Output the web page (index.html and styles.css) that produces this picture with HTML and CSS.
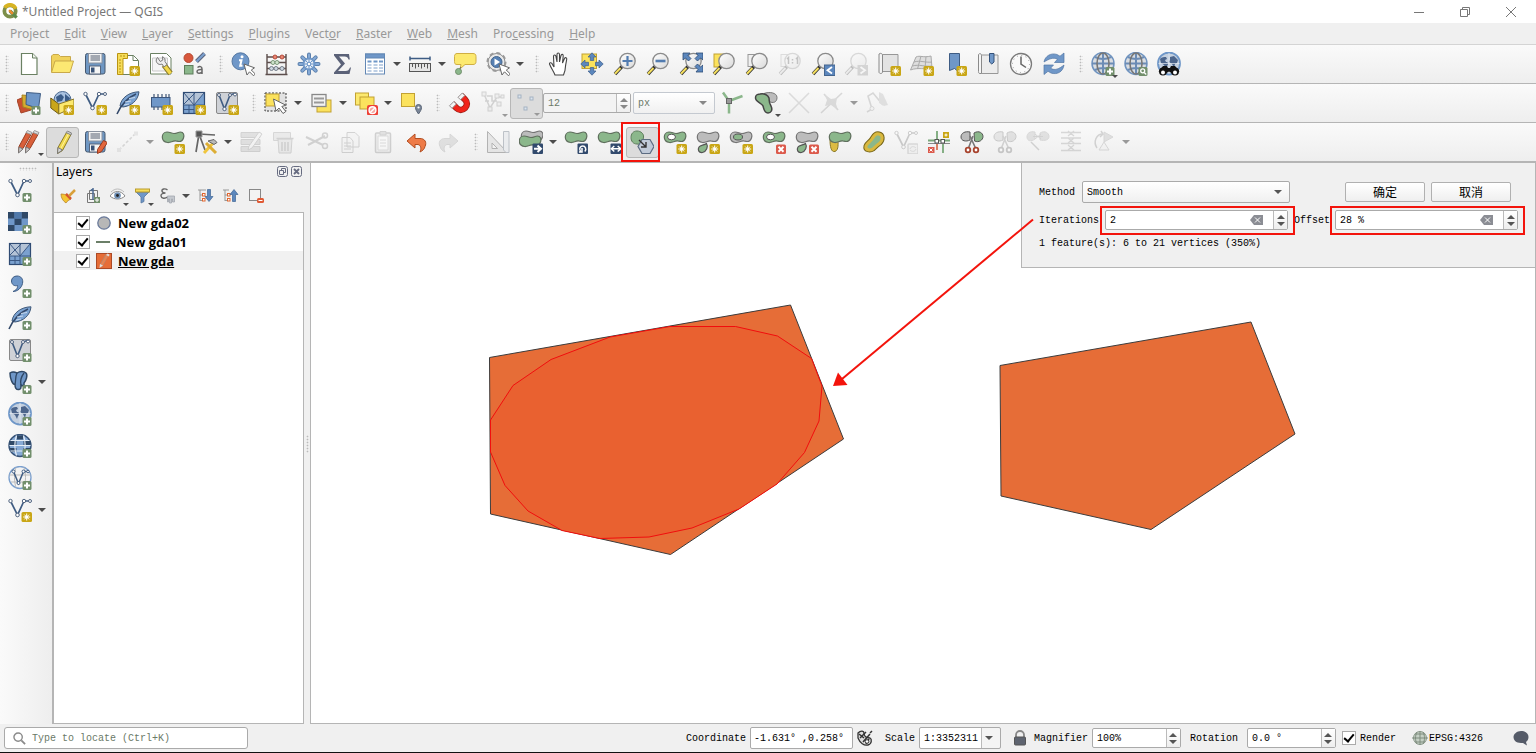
FILE: index.html
```html
<!DOCTYPE html>
<html lang="en">
<head>
<meta charset="utf-8">
<title>*Untitled Project — QGIS</title>
<link rel="stylesheet" href="styles.css">
</head>
<body>
<svg class="sprite" aria-hidden="true">
  <defs>
    <linearGradient id="glass" x1="0" y1="0" x2="1" y2="1"><stop offset="0" stop-color="#fff"/><stop offset="1" stop-color="#d9d9d9"/></linearGradient>
    <symbol id="b-new" viewBox="0 0 24 24"><rect x="13.500" y="14" width="10.500" height="10" rx="1.500" fill="#c9a615"/><path d="M18.700 15.500v7M15.200 19h7M16.300 16.600l4.800 4.800M21.100 16.600l-4.800 4.800" stroke="#fff" stroke-width="1"/><circle cx="18.700" cy="19" r="1.600" fill="#fff"/></symbol>
    <symbol id="b-add" viewBox="0 0 24 24"><rect x="14.500" y="15" width="9" height="9" rx="1.500" fill="#728f6c"/><path d="M19 16.500v6M16 19.500h6" stroke="#fff" stroke-width="2"/></symbol>
    <symbol id="b-del" viewBox="0 0 24 24"><rect x="14" y="14.500" width="10" height="9.500" rx="1.500" fill="#dc5a4c"/><path d="M16.500 16.800l5 5M21.500 16.800l-5 5" stroke="#fff" stroke-width="2"/></symbol>
    <symbol id="b-no" viewBox="0 0 24 24"><rect x="13" y="14" width="11" height="10.500" rx="2" fill="#ee4036"/><circle cx="18.500" cy="19.200" r="3.400" fill="#f6a7a0" stroke="#fff" stroke-width="1.400"/><path d="M16.300 21.500l4.500-4.500" stroke="#fff" stroke-width="1.400"/></symbol>
    <symbol id="doc" viewBox="0 0 24 24"><path d="M4.500 1.500h11l4.500 4.500v16.500h-15.500z" fill="#fff" stroke="#6b8163" stroke-width="1.200"/><path d="M15.500 1.500v4.500h4.500" fill="#eef2ec" stroke="#6b8163"/></symbol>
    <symbol id="folder" viewBox="0 0 24 24"><path d="M1.500 20V4l1.500-1.500h5.500l2 2h10V9" fill="#f0d25c" stroke="#c9a94a"/><path d="M1.500 20.500L5 9h18.500l-3.500 11.500z" fill="#fce872" stroke="#c9a94a"/></symbol>
    <symbol id="floppy" viewBox="0 0 24 24"><rect x="2.500" y="1.500" width="19.500" height="20.500" rx="2" fill="#6f97c3" stroke="#46586f"/><rect x="5.500" y="1.500" width="13.500" height="9.500" fill="#f2f2f2" stroke="#8b93a0"/><path d="M7.500 4h9.500M7.500 6h9.500M7.500 8h9.500" stroke="#555e70"/><rect x="6.500" y="14" width="11" height="8" fill="#f5f5f5" stroke="#56657c"/><rect x="8" y="15.500" width="3.500" height="5" fill="#3a5377"/></symbol>
    <symbol id="layoutnew" viewBox="0 0 24 24"><path d="M6.500 3.500h11l5 5v14h-16z" fill="#fff" stroke="#6b8163"/><path d="M17 3.500v5h5" fill="none" stroke="#6b8163"/><path d="M1.500 1.500h10v5h-4.500v16h-5.500z" fill="#f6dd5a" stroke="#b99312"/><path d="M3 8h2M3 11h2M3 14h2M3 17h2M3 20h2M5 3v2M8 3v2" stroke="#b99312"/><use href="#b-new"/></symbol>
    <symbol id="layouts" viewBox="0 0 24 24"><path d="M1.500 1.500h16l4.500 4.500v16h-20.500z" fill="#fff" stroke="#6b8163"/><path d="M3.500 6h15v13h-15z" fill="#f5f5f5" stroke="#c9c9c9"/><path d="M15 13l6.500 8.500" stroke="#8b7b2c" stroke-width="5.500"/><path d="M15 13l6.500 8.500" stroke="#f3d84a" stroke-width="3.500"/><path d="M8.500 5.500c-2 2-1.500 5 .5 6.300 1.500 1 3 .7 4 .2l2 3 3-2.500-2-3c.5-2-.5-4-2.500-4.800l.3 3.300-2.500 1.500z" fill="#ededed" stroke="#777"/></symbol>
    <symbol id="style" viewBox="0 0 24 24"><circle cx="6.500" cy="6" r="4.500" fill="#d8573c" stroke="#b5482f"/><path d="M14.500 9.500l8-8" stroke="#5b6680" stroke-width="4"/><path d="M14.500 9.500l8-8" stroke="#7ba0cf" stroke-width="2"/><rect x="2.500" y="13.500" width="8.500" height="8.500" fill="#8bb78b" stroke="#5d7d5b"/><path d="M15.500 15.500c2-1.500 4.500-1.300 4.500 1.500v5M20 17.500c-3-.2-5 .5-5 2.300s3 2.200 5 .2" fill="none" stroke="#666" stroke-width="1.500"/></symbol>
    <symbol id="cursor" viewBox="0 0 24 24"><path d="M13 12l3 11 2.500-3.200 4 4 1.800-1.800-4-4 3.200-2.200z" fill="#fff" stroke="#666"/></symbol>
    <symbol id="info" viewBox="0 0 24 24"><circle cx="9.500" cy="9.300" r="8.500" fill="#6f97c8" stroke="#5577a1"/><circle cx="11" cy="4.800" r="1.500" fill="#fff"/><path d="M8 8.200h2.500l-1.300 5.500h2.300" fill="none" stroke="#fff" stroke-width="2"/><use href="#cursor"/></symbol>
    <symbol id="abacus" viewBox="0 0 24 24"><path d="M3 2v20M22 2v20M1.500 22.500h22M3 5h19M3 10.500h19M3 16.500h19" fill="none" stroke="#5c4e4c" stroke-width="1.400"/><g fill="#e88572" stroke="#b54c3c"><circle cx="11" cy="5" r="2"/><circle cx="18" cy="5" r="2"/></g><g fill="#cfe3cd" stroke="#7d9a7c"><circle cx="9" cy="10.500" r="2"/><circle cx="13" cy="10.500" r="2"/></g><g fill="#cdd6df" stroke="#767f8b"><circle cx="7.500" cy="16.500" r="2"/><circle cx="12" cy="16.500" r="2"/><circle cx="18" cy="16.500" r="2"/></g></symbol>
    <symbol id="gear" viewBox="0 0 24 24"><g stroke="#5c80ad" stroke-width="4" stroke-linecap="round"><path d="M12 2.500v19M2.500 12h19M5.300 5.300l13.400 13.400M18.700 5.300L5.300 18.700"/></g><g stroke="#86aad6" stroke-width="2" stroke-linecap="round"><path d="M12 2.500v19M2.500 12h19M5.300 5.300l13.400 13.400M18.700 5.300L5.300 18.700"/></g><circle cx="12" cy="12" r="5.500" fill="#e8eef6" stroke="#6f97c8" stroke-width="2"/><path d="M12 7v10M7 12h10M8.500 8.500l7 7M15.500 8.500l-7 7" stroke="#6f97c8"/><circle cx="12" cy="12" r="1.800" fill="#fff" stroke="#6f97c8"/></symbol>
    <symbol id="sigma" viewBox="0 0 24 24"><path d="M4 2h15l.8 5.500h-1.300c-.8-2.300-1.500-3-4-3H9l6 7-7 7.500h7.500c2.500 0 3.500-1 4.500-3.500h1l-1.500 6.500H4v-1.500l7-8L4 3.500z" fill="#5b6278"/></symbol>
    <symbol id="table" viewBox="0 0 24 24"><rect x="2.500" y="2" width="19" height="20" fill="#fff" stroke="#6287b4"/><rect x="2.500" y="2" width="19" height="4" fill="#6f97c8" stroke="#6287b4"/><path d="M4.500 9.500h4M10.500 9.500h4M16 9.500h4" stroke="#6f97c8" stroke-width="2"/><path d="M4.500 13h4M10.500 13h4M16 13h4M4.500 16h4M10.500 16h4M16 16h4M4.500 19h4M10.500 19h4M16 19h4" stroke="#7e9fca" stroke-width="1.200"/></symbol>
    <symbol id="ruler" viewBox="0 0 24 24"><path d="M1.500 6.500h21M2 4.500v4M22 4.500v4" stroke="#3e5c84" stroke-width="1.500"/><rect x="1.500" y="11.500" width="21" height="8" fill="#e5e5e5" stroke="#555"/><path d="M4.500 12v3M7.500 12v4.500M10.500 12v3M13.500 12v4.500M16.500 12v3M19.500 12v4.500" stroke="#555"/></symbol>
    <symbol id="tip" viewBox="0 0 24 24"><path d="M4 1.500h16c2 0 3 1 3 3v5c0 2-1 3-3 3h-8l-5 4.500 1-4.500H4c-2 0-2.500-1-2.500-3v-5c0-2 1-3 2.500-3z" fill="#fce96f" stroke="#cfae43"/><path d="M6 18l2-3" stroke="#666"/><circle cx="5.500" cy="19.500" r="3" fill="#8bb78b" stroke="#728f6c"/></symbol>
    <symbol id="actions" viewBox="0 0 24 24"><circle cx="10.500" cy="10" r="8.500" fill="#e9e9e9" stroke="#8d8d8d" stroke-width="1"/><circle cx="10.500" cy="10" r="9" fill="none" stroke="#999" stroke-width="2" stroke-dasharray="4 3"/><circle cx="10.500" cy="10" r="5.500" fill="#5680b3" stroke="#45678f"/><path d="M8.500 6.500v7l5.500-3.500z" fill="#fff"/><use href="#cursor"/></symbol>
    <symbol id="hand" viewBox="0 0 24 24"><path d="M8 23c-1-3-4-7-5.500-11 0-2 2.500-1.500 3 .5l1.500 2.500L6.500 4.500c0-2 2-2 2.400-.3L10 10V2.500c0-2 2.400-2 2.500 0V10l1.500-6.500c.5-1.800 2.400-1.300 2.200.5L15.500 11l2-4.500c.8-1.500 2.500-.7 2.200.8-.8 3.700-1.500 9-1.700 11L16.500 23z" fill="#fff" stroke="#444" stroke-width="1.100"/></symbol>
    <symbol id="arrows4" viewBox="0 0 24 24"><g fill="#5c87bd" stroke="#3d5f8c" stroke-width=".7"><path d="M12 .8l4 4.200h-2.300v3.500h-3.400V5H8zM12 23.200L8 19h2.300v-3.500h3.400V19H16zM.8 12L5 8v2.300h3.500v3.400H5V16zM23.200 12L19 16v-2.300h-3.500v-3.400H19V8z"/></g></symbol>
    <symbol id="pansel" viewBox="0 0 24 24"><rect x="2" y="2" width="14.500" height="14.500" fill="#fbe25d" stroke="#c2a133"/><use href="#arrows4"/></symbol>
    <symbol id="lens" viewBox="0 0 24 24"><path d="M9 14.500L2 22" stroke="#333" stroke-width="3.400"/><path d="M7.500 16L2 21.700" stroke="#f6e05e" stroke-width="2"/><circle cx="14.500" cy="9" r="7.700" fill="url(#glass)" stroke="#8b8b8b" stroke-width="1.300"/></symbol>
    <symbol id="zin" viewBox="0 0 24 24"><use href="#lens"/><path d="M14.500 4v10M9.500 9h10" stroke="#527cb0" stroke-width="2.200"/></symbol>
    <symbol id="zout" viewBox="0 0 24 24"><use href="#lens"/><path d="M9.500 9h10" stroke="#527cb0" stroke-width="2.600"/></symbol>
    <symbol id="zfull" viewBox="0 0 24 24"><use href="#lens"/><g fill="#5c87bd" stroke="#2f4b73" stroke-width=".8"><path d="M4 1h7L9 3.500l3 3-2.500 2.500-3-3L4 8zM24 1v7l-2.500-2-3 3L16 6.500l3-3L17 1zM24 20h-7l2-2.500-3-3 2.500-2.500 3 3L24 13z"/></g></symbol>
    <symbol id="zsel" viewBox="0 0 24 24"><rect x="2" y="2" width="12" height="13" fill="#fbe25d" stroke="#c2a133"/><use href="#lens"/></symbol>
    <symbol id="zlayer" viewBox="0 0 24 24"><rect x="3" y="2.500" width="12" height="12" fill="#f0f0f0" stroke="#999"/><use href="#lens"/></symbol>
    <symbol id="z11" viewBox="0 0 24 24"><rect x="3" y="2.500" width="12" height="12" fill="#f0f0f0" stroke="#999"/><use href="#lens"/><path d="M9 7l1.500-1.500V12M18 7l1.500-1.500V12M14.500 7v1.500M14.500 10v1.500" stroke="#444" stroke-width="1.500" fill="none"/></symbol>
    <symbol id="zlast" viewBox="0 0 24 24"><use href="#lens"/><rect x="13.500" y="13" width="10.500" height="10.500" fill="#5c87bd" stroke="#44658e"/><path d="M21 15l-4.500 3.200 4.500 3.200" fill="none" stroke="#fff" stroke-width="1.800"/></symbol>
    <symbol id="znext" viewBox="0 0 24 24"><use href="#lens"/><rect x="13.500" y="13" width="10.500" height="10.500" fill="#888"/><path d="M16.500 15l4.500 3.200-4.500 3.200" fill="none" stroke="#fff" stroke-width="1.800"/></symbol>
    <symbol id="mapnew" viewBox="0 0 24 24"><path d="M5.500 2.500H21v17H5.500z" fill="#e3e3e3" stroke="#979797"/><path d="M2 2c2-1.500 3.500 0 3.500 1v17c0 2-3.500 2-3.500 0z" fill="#f3f3f3" stroke="#8a8a8a"/><use href="#b-new"/></symbol>
    <symbol id="map3d" viewBox="0 0 24 24"><path d="M6 5c4-2 7 1 15-1l1 12c-6 2-14-1-21.500 2z" fill="#dedede" stroke="#aaa"/><path d="M4 10c6-2 12 1 18 0M2.500 14c6-2 13 1 19.500 0M11 4L7.500 17M16 4.500l-1 12" fill="none" stroke="#aaa"/><use href="#b-new"/></symbol>
    <symbol id="bmnew" viewBox="0 0 24 24"><path d="M6.500 1.500h10v19l-5-4-5 2z" fill="#6f97c8" stroke="#3e5c84"/><use href="#b-new"/></symbol>
    <symbol id="bmshow" viewBox="0 0 24 24"><path d="M5.500 3H22v18.500H5.500z" fill="#ececec" stroke="#979797"/><path d="M2.500 2.500c1-1.500 3-1 3 1v18H4c-1.500 0-1.500-1-1.500-2z" fill="#f5f5f5" stroke="#8a8a8a"/><path d="M13.500 1.500h4.500v8.500l-2.200 2-2.300-2z" fill="#6f97c8" stroke="#34527a"/></symbol>
    <symbol id="clock" viewBox="0 0 24 24"><circle cx="12" cy="12" r="10.500" fill="#fafafa" stroke="#7a7a7a" stroke-width="1.300"/><path d="M12 4.500V12l5 3.500" fill="none" stroke="#666" stroke-width="1.500"/><circle cx="12" cy="12" r="8.500" fill="none" stroke="#999" stroke-dasharray="1 3.450"/></symbol>
    <symbol id="refresh" viewBox="0 0 24 24"><g fill="#6f97c8" stroke="#5275a3" stroke-width=".7"><path d="M2 10C3 4 9 .5 15 2.500l3 1.700L22 1v9.500h-9.500l3-3.300C11 5 7 7 2 10z"/><path d="M22 13c-1 7-7 10-13 8l-3-1.700L2 22.500V13h9.500l-3 3.300c4.500 2.500 8.500.7 13.500-3.300z"/></g></symbol>
    <symbol id="globe" viewBox="0 0 24 24"><circle cx="12" cy="11.500" r="11" fill="#d9dde2" stroke="#7094c0" stroke-width="1.500"/><path d="M12 1v21M4 5c5 2.500 11 2.500 16 0M1 11.500h22M4 18c5-2.500 11-2.500 16 0" stroke="#6c8cb5" stroke-width="2" fill="none"/><ellipse cx="12" cy="11.500" rx="6" ry="10.500" fill="none" stroke="#777" stroke-width="1.600"/></symbol>
    <symbol id="globeadd" viewBox="0 0 24 24"><use href="#globe"/><use href="#b-add"/></symbol>
    <symbol id="globefind" viewBox="0 0 24 24"><use href="#globe"/><rect x="14.500" y="15" width="9" height="9" rx="1.500" fill="#728f6c"/><circle cx="18.700" cy="18.800" r="2" fill="none" stroke="#fff" stroke-width="1.300"/><path d="M20.200 20.500l2 2" stroke="#fff" stroke-width="1.300"/></symbol>
    <symbol id="earth" viewBox="0 0 24 24"><circle cx="12" cy="11.500" r="11" fill="#c4d0df" stroke="#6f97c8" stroke-width="1.800"/><path d="M3 7c2-2 4-2 6-2l1 2-2 1 1 2c2 0 3 2 1 4l-1 3-2-4-3-2zM13 5l4-1 4 4-1 3-2 1-1 4-2-4-3-2 1-2z" fill="#4c658b"/><path d="M1.500 11.500h21M12 1v21" stroke="#e7edf4" stroke-width=".7"/></symbol>
    <symbol id="binoc" viewBox="0 0 24 24"><use href="#earth"/><path d="M6 14h4l1 2h2l1-2h4l4.500 5.500-7 2-3.500-2-3.500 2-7-2z" fill="#111"/><circle cx="6" cy="19.500" r="4" fill="#111"/><circle cx="18" cy="19.500" r="4" fill="#111"/><circle cx="6" cy="20.500" r="2" fill="#fff"/><circle cx="18" cy="20.500" r="2" fill="#fff"/></symbol>
    <symbol id="dsm" viewBox="0 0 24 24"><path d="M0 9l9-4 5 14-10 3z" fill="#c9502f" stroke="#a4442a"/><path d="M5 4l12 1v14l-11-3z" fill="#d5ac2f" stroke="#a88420"/><path d="M9.500 1.500l14 1-2 15-12.500-4z" fill="#6f97c8" stroke="#3e5c84"/><use href="#b-add"/></symbol>
    <symbol id="gpkg" viewBox="0 0 24 24"><circle cx="12.500" cy="9" r="8.500" fill="#a9c1df" stroke="#4b6990"/><path d="M6 6l5-3 3 3-2 4-5 1zM15 3l5 4-1 4-4-1z" fill="#3b5c88"/><path d="M.8 7l8 6v10l-8-6z" fill="#c9a61a" stroke="#6d5c1a"/><path d="M8.800 13L24 8v8l-15.200 7z" fill="#fce96f" stroke="#8b7626"/><use href="#b-new"/></symbol>
    <symbol id="vnet" viewBox="0 0 24 24"><path d="M2.500 3l7 14L16 3h6" fill="none" stroke="#3f5c82" stroke-width="1.700"/><g fill="#fff" stroke="#51647f"><circle cx="2.500" cy="3" r="1.700"/><circle cx="16" cy="3" r="1.700"/><circle cx="22" cy="3" r="1.500"/><circle cx="9.500" cy="17" r="1.800"/></g></symbol>
    <symbol id="vnew" viewBox="0 0 24 24"><use href="#vnet"/><use href="#b-new"/></symbol>
    <symbol id="vadd" viewBox="0 0 24 24"><use href="#vnet"/><use href="#b-add"/></symbol>
    <symbol id="feather" viewBox="0 0 24 24"><path d="M23 .8C13 1 5 7 4 15l3 1c8-1 15-6 16-15.200z" fill="#7ba3d2" stroke="#3f5878"/><path d="M1 23C5 14 11 7 20 3" fill="none" stroke="#33496a" stroke-width="1.600"/><path d="M9 11l6-1M8 14l5-1M13 7.500l6-1" stroke="#c9daee"/></symbol>
    <symbol id="fnew" viewBox="0 0 24 24"><use href="#feather"/><use href="#b-new"/></symbol>
    <symbol id="fadd" viewBox="0 0 24 24"><use href="#feather"/><use href="#b-add"/></symbol>
    <symbol id="chip" viewBox="0 0 24 24"><path d="M5 3v16M9 3v16M13 3v16M17 3v16M20 3v16" stroke="#5b6e89" stroke-width="1.400"/><rect x="2.500" y="6.500" width="18.500" height="9.500" fill="#6f97c8" stroke="#3c567c"/><use href="#b-new"/></symbol>
    <symbol id="mesh" viewBox="0 0 24 24"><rect x="1.500" y="1.500" width="21" height="21" fill="#7ba1cf" stroke="#2f4b73" stroke-width="1.200"/><path d="M2 2h20L12 14H2z" fill="#b4c3d6"/><path d="M1.500 14h21M12 1.500v21M2 13L13 2M2 2l10 12L22 2M7 14v8M2 18.500h10" stroke="#3c5a85" fill="none"/></symbol>
    <symbol id="meshnew" viewBox="0 0 24 24"><use href="#mesh"/><use href="#b-new"/></symbol>
    <symbol id="meshadd" viewBox="0 0 24 24"><use href="#mesh"/><use href="#b-add"/></symbol>
    <symbol id="virt" viewBox="0 0 24 24"><rect x="1.500" y="1.500" width="21" height="21" rx="1.500" fill="#cfd2d7" stroke="#888"/><path d="M4 4l5.500 14L15 4l4-1.500 2 1" fill="none" stroke="#3f5c82" stroke-width="1.600"/><g fill="#fff" stroke="#51647f"><circle cx="4" cy="4" r="1.500"/><circle cx="15" cy="4" r="1.500"/><circle cx="20" cy="3.500" r="1.500"/><circle cx="9.500" cy="18" r="1.700"/></g></symbol>
    <symbol id="virtnew" viewBox="0 0 24 24"><use href="#virt"/><use href="#b-new"/></symbol>
    <symbol id="virtadd" viewBox="0 0 24 24"><use href="#virt"/><use href="#b-add"/></symbol>
    <symbol id="selrect" viewBox="0 0 24 24"><rect x="1" y="2" width="21" height="18" fill="#e2e2e2" stroke="#333" stroke-dasharray="2 1.500"/><rect x="2" y="3" width="13" height="12" fill="#fbe25d" stroke="#c2a133"/><path d="M9.500 8l2.500 12 3-3 4 5.500 2.800-2-4-5 4-1.300z" fill="#fff" stroke="#666"/></symbol>
    <symbol id="selform" viewBox="0 0 24 24"><rect x="8" y="9" width="14" height="12" fill="#fbe25d" stroke="#c2a133"/><rect x="3" y="3.500" width="14" height="12" fill="#f2f2f2" stroke="#888" stroke-width="1.300"/><path d="M5 7.500h10M5 11.500h10" stroke="#999" stroke-width="2"/></symbol>
    <symbol id="desel" viewBox="0 0 24 24"><rect x="1.500" y="2" width="13" height="12" fill="#fce96f" stroke="#c2a133"/><rect x="6" y="6" width="14" height="12" fill="#fbe25d" stroke="#c2a133"/><use href="#b-no"/></symbol>
    <symbol id="selloc" viewBox="0 0 24 24"><rect x="2.500" y="2.500" width="13" height="13" fill="#fbe25d" stroke="#c2a133"/><path d="M19.500 23c-2-3-3-4.500-3-6.500a3 3 0 0 1 6 0c0 2-1 3.500-3 6.500z" fill="#7a8698" stroke="#5c6778"/><circle cx="19.500" cy="16.500" r="1.100" fill="#fff"/></symbol>
    <symbol id="magnet" viewBox="0 0 24 24"><path d="M4 12.500l4.500 4.500c2.500 2.500 6 2.500 8.500 0s2.500-6 0-8.500L12.500 4" fill="none" stroke="#9b1f17" stroke-width="6.500"/><path d="M4.500 13l4 4c2.500 2.500 6 2.500 8.500 0s2.500-6 0-8.500l-4-4" fill="none" stroke="#f0241a" stroke-width="4.800"/><path d="M1.500 14.800l4.300-4.300 2.500 2.500L4 17.300zM10 6.300L14.300 2l2.500 2.500-4.300 4.300z" fill="#f5f5f5" stroke="#999"/></symbol>
    <symbol id="snapv" viewBox="0 0 24 24"><path d="M3 3l6 14L16 6h6M6 5h5v5h5M4 10h4" fill="none" stroke="#777" stroke-width="1.500"/><g fill="#ddd" stroke="#777"><rect x="1" y="1" width="4" height="4"/><rect x="14" y="3" width="4" height="4"/><rect x="20" y="4" width="3" height="3"/><rect x="7" y="16" width="4" height="4"/><rect x="16" y="11" width="4" height="4"/></g></symbol>
    <symbol id="snappts" viewBox="0 0 24 24"><g fill="#dce5ee" stroke="#a4b2c2"><rect x="4" y="4" width="3" height="3"/><rect x="16" y="6" width="3" height="3"/><rect x="10" y="16" width="3" height="3"/></g></symbol>
    <symbol id="topo" viewBox="0 0 24 24"><path d="M8 10v12.500M8 10L2 1.500M8 10l13.500-5" stroke="#8bb78b" stroke-width="2.500"/><rect x="5.500" y="7.500" width="5" height="5" fill="#999" stroke="#666"/></symbol>
    <symbol id="overlap" viewBox="0 0 24 24"><path d="M10 2.500c5-2 13-1 13 4s-4 6-8 4-7-5-5-8z" fill="#bbb" stroke="#777"/><path d="M6 3c4-1 8 1 9 4 .5 3-.5 4 2 8 2 4 0 7-3 7-4 0-4-4-5-7S1.500 11 1.500 7 3.500 3.500 6 3z" fill="#8bb78b" stroke="#444" stroke-width="1.500"/></symbol>
    <symbol id="cross" viewBox="0 0 24 24"><path d="M2 2l20 20M22 2L2 22" stroke="#999" stroke-width="1.600"/></symbol>
    <symbol id="selfsnap" viewBox="0 0 24 24"><path d="M1 22L22 2M4 3l14 16" stroke="#888" stroke-width="1.600"/><path d="M4 3l7 5 6-1-1 6 2 6-7-5-6 1 2-6z" fill="#8899ab"/></symbol>
    <symbol id="trace" viewBox="0 0 24 24"><path d="M2 21l5-3L3 5l5-3 10 12" fill="none" stroke="#888" stroke-width="1.600"/><circle cx="7" cy="17.500" r="2" fill="#eee" stroke="#888"/><path d="M14 1l4 2 5 11-4 1-5-3z" fill="#aaa"/></symbol>
    <symbol id="pencil" viewBox="0 0 24 24"><path d="M16.500 2.500l4.500 2-8.500 16-5 3 .5-6z" fill="#f1d94e" stroke="#8b7a28"/><path d="M18.500 4l-8 15" stroke="#fff3a0"/><path d="M8 17.500l4.500 2.500-5 3.500z" fill="#d8d8d8" stroke="#777"/><path d="M16 2.500l1.500-1.500 4 2-.5 2z" fill="#ccc" stroke="#888"/></symbol>
    <symbol id="pencils" viewBox="0 0 24 24"><g id="redpen"><path d="M9.500 2.500l4.500 2-8 14-4.500 4 .5-6z" fill="#d9603a" stroke="#983d21"/><path d="M2 17l4 2-4.500 4z" fill="#ccc" stroke="#777"/><path d="M9 2.500l1.500-2 4.500 2-1 2z" fill="#ddd" stroke="#999"/></g><use href="#redpen" x="7"/></symbol>
    <symbol id="saveedit" viewBox="0 0 24 24"><use href="#floppy"/><path d="M20.500 10.500l4 2-6 9-4 2V19.500z" fill="#e2663c" stroke="#983d21"/></symbol>
    <symbol id="line" viewBox="0 0 24 24"><path d="M3 20L20 3" stroke="#888" stroke-width="1.600" stroke-dasharray="3 2"/><rect x="1" y="18" width="4" height="4" fill="#bbb"/><rect x="18" y="1.500" width="4" height="4" fill="#bbb"/></symbol>
    <symbol id="blob" viewBox="0 0 24 24"><path d="M6 2c3.500 0 4 1.500 7 1.500s4-1.500 6.500-1.500c3 0 4 3 3 6s-3.500 4-6.500 3.200C12 10 10 13 6.500 12.500 3 12 1.300 9.500 1.300 7S3 2 6 2z" stroke-width="1.200"/></symbol>
    <symbol id="polynew" viewBox="0 0 24 24"><use href="#blob" class="green"/><use href="#b-new"/></symbol>
    <symbol id="digi" viewBox="0 0 24 24"><path d="M5 4L2 22M5 4l6 16M5 4l16 1" fill="none" stroke="#666" stroke-width="1.700"/><path d="M2 1h6v6H2z" fill="#555" stroke="#999"/><path d="M10 23L20 12" stroke="#f0c63e" stroke-width="3"/><path d="M12 13l10 10" stroke="#ddae35" stroke-width="3"/><path d="M14 11l6-1.500 3 3-3 2z" fill="#b8b8b8" stroke="#666"/></symbol>
    <symbol id="multi" viewBox="0 0 24 24"><path d="M2 2.500h19v5H2zM2 9.500h19v5H2zM2 16.500h19v5H2z" fill="#aaa" stroke="#777"/><path d="M20 2l3 2-10 14-4 2 1-4z" fill="#eee" stroke="#777"/></symbol>
    <symbol id="trash" viewBox="0 0 24 24"><path d="M1.500 2.500h17v8h-17z" fill="#ccc" stroke="#888"/><path d="M6 9h14l-1 14H7z" fill="#ccc" stroke="#777"/><path d="M4.500 8.500h17M10 12v9M13 12v9M16 12v9" stroke="#777" stroke-width="1.600"/></symbol>
    <symbol id="cut" viewBox="0 0 24 24"><path d="M1 7l17 8M3 15L20 6" stroke="#777" stroke-width="2"/><circle cx="20" cy="5.500" r="2.500" fill="none" stroke="#777" stroke-width="1.500"/><circle cx="20" cy="16" r="2.500" fill="none" stroke="#777" stroke-width="1.500"/></symbol>
    <symbol id="copy" viewBox="0 0 24 24"><path d="M9 2.500h8l4 4V17H9zM4 7.500h8l3 3.500v11.500H4z" fill="#eee" stroke="#777"/><path d="M6 13h7M6 16h7M6 19h7" stroke="#777"/></symbol>
    <symbol id="paste" viewBox="0 0 24 24"><rect x="4.500" y="3" width="15" height="19.500" rx="1" fill="#ddd" stroke="#66707d" stroke-width="1.500"/><path d="M7 6h10v14H7z" fill="#fff" stroke="#999"/><path d="M9 1.500h6V5H9z" fill="#aaa" stroke="#777"/><path d="M9 10h6M9 13h6M9 16h6" stroke="#999"/></symbol>
    <symbol id="undo" viewBox="0 0 24 24"><path d="M3 11l8-7v4.500h5c5 0 7 4 5 8-.6 2.500-2 4-5 5.500 1.500-3 1-7-2-7.500h-3V18z" fill="#ee7b48" stroke="#b24d20"/></symbol>
    <symbol id="redo" viewBox="0 0 24 24"><path d="M21 11l-8-7v4.500H8c-5 0-7 4-5 8 .6 2.500 2 4 5 5.500-1.500-3-1-7 2-7.500h3V18z" fill="#aaa" stroke="#888"/></symbol>
    <symbol id="setsq" viewBox="0 0 24 24"><path d="M1.500 1.500v21h20zM6 13v5.500h5.500z" fill="#ddd" fill-rule="evenodd" stroke="#888"/><path d="M17.500 1.500h5.500v21h-3l-2.500-2.500z" fill="#e4e7eb" stroke="#98a0aa"/></symbol>
    <symbol id="darkbadge" viewBox="0 0 24 24"><rect x="13.500" y="13.500" width="10.500" height="10.500" rx="1" fill="#324a6d"/></symbol>
    <symbol id="movef" viewBox="0 0 24 24"><use href="#blob" class="gray" x="1" y="-1"/><use href="#blob" class="green" x="-1" y="4"/><use href="#darkbadge"/><path d="M15 18.800h6M18.500 15.500l3.500 3.300-3.500 3.300" stroke="#fff" stroke-width="2" fill="none"/></symbol>
    <symbol id="rotf" viewBox="0 0 24 24"><use href="#blob" class="green"/><use href="#darkbadge"/><path d="M16.500 21.500c-2-3 0-5.500 2.300-5.500s4.200 3 2 5.500M18 18v4h-3" fill="none" stroke="#fff" stroke-width="1.500"/></symbol>
    <symbol id="scalef" viewBox="0 0 24 24"><use href="#blob" class="green"/><use href="#darkbadge"/><path d="M15 18.800h8M17.300 16l-3 2.800 3 2.800M20.700 16l3 2.800-3 2.800" fill="none" stroke="#fff" stroke-width="1.400"/></symbol>
    <symbol id="simplify" viewBox="0 0 24 24"><path d="M7 1c4 0 7 3 6.500 6S13 11 15 14l-3 3c-2-2-2-3-5-3-4 0-6-3-6-6.500S3 1 7 1z" fill="#8bb78b" stroke="#5d7d5b"/><path d="M12 9.500h8l4 7-4 7h-8l-4-7z" fill="#c0cad8" stroke="#5c6c82" stroke-width="1.200"/><path d="M9 10l6.500 6.500M16 12v5h-5" stroke="#333" stroke-width="1.400" fill="none"/></symbol>
    <symbol id="ringnew" viewBox="0 0 24 24"><use href="#blob" class="green"/><ellipse cx="8.500" cy="7" rx="4" ry="2.800" fill="#fff" stroke="#555"/><use href="#b-new"/></symbol>
    <symbol id="part" viewBox="0 0 24 24"><use href="#blob" class="gray"/><path d="M10.500 13.500c2 3 0 8-4 9-4 .5-5-3-3.500-5.500 1.500-2 5-1.500 7.500-3.500z" fill="#8bb78b" stroke="#555" stroke-width="1.200"/></symbol>
    <symbol id="partnew" viewBox="0 0 24 24"><use href="#part"/><use href="#b-new"/></symbol>
    <symbol id="fillring" viewBox="0 0 24 24"><use href="#blob" class="gray"/><ellipse cx="9" cy="7" rx="4.500" ry="3" fill="#8bb78b" stroke="#555"/><use href="#b-new"/></symbol>
    <symbol id="ringdel" viewBox="0 0 24 24"><use href="#blob" class="green"/><ellipse cx="8.500" cy="7" rx="4" ry="2.800" fill="#fff" stroke="#555"/><use href="#b-del"/></symbol>
    <symbol id="partdel" viewBox="0 0 24 24"><use href="#part"/><use href="#b-del"/></symbol>
    <symbol id="reshape" viewBox="0 0 24 24"><path d="M2 9h8c0 4 1 11-3 12.500-4 1-5-5-5-12.500z" fill="#dcbb42" stroke="#8b7a28"/><use href="#blob" class="green"/></symbol>
    <symbol id="offset" viewBox="0 0 24 24"><path d="M18 4c4 1 4 6 1 9-3 2-5 4-7 6-3 2-8 1-7-3 1-3 4-4 6-7 2-3 3-6 7-5z" fill="#8bb78b" stroke="#756418" stroke-width="5"/><path d="M18 4c4 1 4 6 1 9-3 2-5 4-7 6-3 2-8 1-7-3 1-3 4-4 6-7 2-3 3-6 7-5z" fill="#8bb78b" stroke="#d9b83f" stroke-width="3"/></symbol>
    <symbol id="splitv" viewBox="0 0 24 24"><use href="#vnet"/><rect x="14" y="14" width="10" height="10" rx="1" fill="#e3e6ea" stroke="#8694a8" stroke-width="1.500"/><path d="M16 19c1-3 4-3 6-1M22 19c-1 3-4 3-6 1" fill="none" stroke="#8694a8"/></symbol>
    <symbol id="node" viewBox="0 0 24 24"><path d="M10 1v9M1 10.500h22M16 12v11" stroke="#79a879" stroke-width="1.800"/><path d="M10 12v8" stroke="#d77353" stroke-width="1.800"/><path d="M1 13.500h22" stroke="#888"/><rect x="8" y="9.500" width="3.500" height="3.500" fill="#fff" stroke="#555"/><rect x="14" y="9.500" width="3.500" height="3.500" fill="#fff" stroke="#555"/><rect x="16" y="2" width="6" height="6" fill="#c9a615"/><path d="M17.500 5h3M19 3.500v3" stroke="#fff"/><rect x="1" y="17" width="6.500" height="6" fill="#dc5a4c"/><path d="M2.500 18.500l3 3M5.500 18.500l-3 3" stroke="#fff"/></symbol>
    <symbol id="scis" viewBox="0 0 24 24"><path d="M13 6l-4.500 12M10 6l5.500 12" stroke="#777" stroke-width="1.600"/><circle cx="8" cy="20" r="2.300" fill="#fff" stroke="#a8452f" stroke-width="1.800"/><circle cx="16" cy="20" r="2.300" fill="#fff" stroke="#a8452f" stroke-width="1.800"/></symbol>
    <symbol id="splitf" viewBox="0 0 24 24"><path d="M10 2c-5-1-9 1-9 5s5 5 9 3z" fill="#bbb" stroke="#555"/><path d="M14 3c5-3 9 0 9 3.500S19 13 14.500 11z" fill="#8bb78b" stroke="#555"/><use href="#scis"/></symbol>
    <symbol id="merge" viewBox="0 0 24 24"><path d="M9 2C4 1 1 3 1 7s4 5 8 2zM14 3c5-3 9 0 9 3.500S19 11 14 10z" fill="#aaa" stroke="#888"/><path d="M7 6.500h10M9 4l3 2.500L9 9M15 4l-3 2.500L15 9" stroke="#667a94" fill="none"/><path d="M5 12l8 8" stroke="#777" stroke-width="1.500"/></symbol>
    <symbol id="align" viewBox="0 0 24 24"><path d="M2 2.500h20M2 8h20M2 13.500h20M2 20.500h20M9 1l3 2.500L9 6M15 1l-3 2.500L15 6M9 8l3 2.500L9 13M15 8l-3 2.500 3 2.500M9 15l3 2.500L9 20M15 15l-3 2.500 3 2.500" fill="none" stroke="#888" stroke-width="1.300"/></symbol>
    <symbol id="rotsym" viewBox="0 0 24 24"><path d="M5 18C1 12 4 4 11 4l-2-3M11 4L8 7" fill="none" stroke="#777" stroke-width="1.500"/><path d="M12 2l9 5-9 5z" fill="#9ba9ba" stroke="#888"/><path d="M12 12l5 8H7z" fill="#eee" stroke="#888"/></symbol>
    <symbol id="raster" viewBox="0 0 24 24"><path d="M0 2h20v19H0z" fill="#6f97c8"/><path d="M0 2h6.500v6.500H0zM13.500 2H20v6.500h-6.500zM6.500 8.500h7V15h-7zM0 15h6.500v6H0z" fill="#2f4866"/><path d="M6.500 2h7v6.500h-7z" fill="#5079aa"/><use href="#b-add"/></symbol>
    <symbol id="comma" viewBox="0 0 24 24"><path d="M5 17.500c3-1 5-3.500 4.500-6-3 1-6-1-6-4.500C3.500 4 6 2 9 2c4 0 6.500 3 5.500 7.500-1 4.500-5 8-9.500 8z" fill="#6f97c8" stroke="#3e5c84"/><use href="#b-add"/></symbol>
    <symbol id="pg" viewBox="0 0 24 24"><path d="M2 3c3-2 5-1 7 0 3-2 7-2 9 0 2 2 0 8-2 10v3l-3-1c0 3 0 4-2 4.500-3 .5-4-2-4-5-3 0-5-7-5-11.500z" fill="#6f97c8" stroke="#2f4866" stroke-width="1.500"/><path d="M9 3c-2 4-1 8-2 11M13 15c-1-4 0-8 3-12" fill="none" stroke="#2f4866" stroke-width="1.300"/><use href="#b-add"/></symbol>
    <symbol id="earthadd" viewBox="0 0 24 24"><use href="#earth"/><use href="#b-add"/></symbol>
    <symbol id="wcs" viewBox="0 0 24 24"><circle cx="12" cy="11.500" r="11" fill="#87aad5" stroke="#365277" stroke-width="1.400"/><path d="M9 1.500h6v4H9zM1.500 7h7v4h-7zM15.500 7h7v4h-7zM1.500 14h7v4H4zM15.500 14h7l-2 4h-5z" fill="#2f4866"/><path d="M2.500 6.500h19M1.500 11.500h21M2.500 17h19M8.500 1.500c-2 6-2 14 0 20M15.500 1.500c2 6 2 14 0 20" fill="none" stroke="#e4edf7" stroke-width="1.200"/><use href="#b-add"/></symbol>
    <symbol id="wfs" viewBox="0 0 24 24"><circle cx="12" cy="11.500" r="11" fill="#f3f3f3" stroke="#7a9fce" stroke-width="1.300"/><path d="M1.500 9h21M3 16h18M8 1.500c-2 6-2 14 0 20M16 1.500c2 6 2 14 0 20" fill="none" stroke="#bbb"/><path d="M5.500 5.500l5 12 5-12h5" fill="none" stroke="#3f5c82" stroke-width="1.500"/><g fill="#fff" stroke="#3f5c82"><circle cx="5.500" cy="5.500" r="1.500"/><circle cx="15.500" cy="5.500" r="1.500"/><circle cx="20" cy="5.500" r="1.300"/><circle cx="10.500" cy="17" r="1.500"/></g><use href="#b-add"/></symbol>
    <symbol id="brush" viewBox="0 0 16 16"><path d="M1 6c3 0 4 1 6 0l4 5c-2 1-4 2-5 4-3-2-5-5-5-9z" fill="#f4c430" stroke="#b8842b" stroke-width=".8"/><path d="M6 6l5 5" stroke="#d5552f" stroke-width="2.500"/><path d="M9 8l6-6" stroke="#d9a03a" stroke-width="2.500"/></symbol>
    <symbol id="group" viewBox="0 0 16 16"><path d="M4.500 2.500h8v9h-8zM2.500 5.500h7v9h-7z" fill="#f3f3f3" stroke="#777"/><path d="M8 0v12M5.500 3L8 .5" stroke="#4c6a92" stroke-width="1.500"/><rect x="9" y="9" width="6" height="6" fill="#728f6c"/><path d="M12 10v4M10 12h4" stroke="#fff"/></symbol>
    <symbol id="eye" viewBox="0 0 16 16"><path d="M0 8c4-6 11-6 15 0-4 4-11 4-15 0z" fill="#fff" stroke="#888"/><circle cx="7.500" cy="7.500" r="3.300" fill="#6f8fb4"/><circle cx="7.500" cy="7.500" r="1.400" fill="#222"/><path d="M1 4c4-4 9-4 13 0" fill="none" stroke="#bbb"/></symbol>
    <symbol id="funnel" viewBox="0 0 16 16"><path d="M1 4l5 5v6l3-1.500V9l5-5z" fill="#6f97c8" stroke="#55779f" stroke-width=".8"/><rect x=".5" y="1" width="14" height="3" fill="#f6dd5a" stroke="#b99b2d"/></symbol>
    <symbol id="eps" viewBox="0 0 16 16"><path d="M7.500 2C5 0 1.500 1 2 3.200 2.300 4.700 4 5 5.500 5 3 5 .8 6 1 8c.3 2.500 4 3 6.500 1" fill="none" stroke="#666" stroke-width="1.400"/><path d="M7.500 8h7v6h-2v-3h-1v4h-2v-4h-1v3h-1z" fill="#c5c9cf" stroke="#a1a6ad" stroke-width=".8"/></symbol>
    <symbol id="expand" viewBox="0 0 16 16"><path d="M0 2h8M2 2v11M2 7h3M2 12.500h3" stroke="#999" fill="none"/><rect x="4.500" y="5.500" width="2.500" height="2.500" fill="#fff" stroke="#e0662f"/><rect x="4.500" y="10.500" width="2.500" height="2.500" fill="#fff" stroke="#e0662f"/><path d="M9.500 1.500h3v7h2.500l-4 5-4-5h2.500z" fill="#5c87bd" stroke="#3f6494" stroke-width=".7"/></symbol>
    <symbol id="collapse" viewBox="0 0 16 16"><path d="M0 2h6M2 2v11M2 7h3M2 12.500h3" stroke="#999" fill="none"/><rect x="4.500" y="5.500" width="2.500" height="2.500" fill="#fff" stroke="#e0662f"/><rect x="4.500" y="10.500" width="2.500" height="2.500" fill="#fff" stroke="#e0662f"/><path d="M9.500 13.500h3v-7h2.500l-4-5-4 5h2.500z" fill="#5c87bd" stroke="#3f6494" stroke-width=".7"/></symbol>
    <symbol id="remove" viewBox="0 0 16 16"><rect x="1.500" y="1.500" width="11" height="11" fill="#f3f3f3" stroke="#888"/><rect x="9" y="10" width="7" height="5" rx="1.500" fill="#e05a35"/><path d="M10.500 12.500h4" stroke="#fff"/></symbol>
    <symbol id="clear" viewBox="0 0 14 10"><path d="M4 0h9v10H4L0 5z" fill="#8b8d94"/><path d="M5 2.500l5 5M10 2.500l-5 5" stroke="#fff"/></symbol>
  </defs>
</svg>

<div class="app">
<header class="titlebar">
  <svg class="logo" viewBox="0 0 18 18" aria-hidden="true"><circle cx="8.500" cy="8.500" r="6" fill="none" stroke="#7d8f4a" stroke-width="4"/><path d="M3 5a6.500 6.500 0 0 1 11.500 1" fill="none" stroke="#d8b423" stroke-width="4"/><path d="M8.500 8.500l7 7" stroke="#5d8a49" stroke-width="3.500"/><path d="M7.500 7.500l4 4" stroke="#ee8a2c" stroke-width="2.500"/></svg>
  <h1>*Untitled Project — QGIS</h1>
  <div class="winbtns">
    <button aria-label="Minimize"><svg viewBox="0 0 10 10"><path d="M0 5.500h10"/></svg></button>
    <button aria-label="Restore"><svg viewBox="0 0 10 10"><path d="M.5 2.500h7v7h-7zM2.500 2V.5h7v7H8"/></svg></button>
    <button aria-label="Close"><svg viewBox="0 0 10 10"><path d="M0 0l10 10M10 0L0 10"/></svg></button>
  </div>
</header>
<nav class="menubar">
  <button>Pro<u>j</u>ect</button><button><u>E</u>dit</button><button><u>V</u>iew</button><button><u>L</u>ayer</button><button><u>S</u>ettings</button><button><u>P</u>lugins</button><button>Vect<u>o</u>r</button><button><u>R</u>aster</button><button><u>W</u>eb</button><button><u>M</u>esh</button><button>Pro<u>c</u>essing</button><button><u>H</u>elp</button>
</nav>

<div class="toolbar" role="toolbar" aria-label="Project and navigation">
  <i class="grip"></i>
  <button class="tool" aria-label="New project"><svg><use href="#doc"/></svg></button>
  <button class="tool" aria-label="Open project"><svg><use href="#folder"/></svg></button>
  <button class="tool" aria-label="Save project"><svg><use href="#floppy"/></svg></button>
  <button class="tool" aria-label="New print layout"><svg><use href="#layoutnew"/></svg></button>
  <button class="tool" aria-label="Layout manager"><svg><use href="#layouts"/></svg></button>
  <button class="tool" aria-label="Style manager"><svg><use href="#style"/></svg></button>
  <i class="grip"></i>
  <button class="tool" aria-label="Identify features"><svg><use href="#info"/></svg></button>
  <button class="tool" aria-label="Field calculator"><svg><use href="#abacus"/></svg></button>
  <button class="tool" aria-label="Toolbox"><svg><use href="#gear"/></svg></button>
  <button class="tool" aria-label="Statistical summary"><svg><use href="#sigma"/></svg></button>
  <button class="tool drop" aria-label="Attribute table"><svg><use href="#table"/></svg></button>
  <button class="tool drop" aria-label="Measure"><svg><use href="#ruler"/></svg></button>
  <button class="tool" aria-label="Map tips"><svg><use href="#tip"/></svg></button>
  <button class="tool drop" aria-label="Run action"><svg><use href="#actions"/></svg></button>
  <i class="grip"></i>
  <button class="tool" aria-label="Pan map"><svg><use href="#hand"/></svg></button>
  <button class="tool" aria-label="Pan to selection"><svg><use href="#pansel"/></svg></button>
  <button class="tool" aria-label="Zoom in"><svg><use href="#zin"/></svg></button>
  <button class="tool" aria-label="Zoom out"><svg><use href="#zout"/></svg></button>
  <button class="tool" aria-label="Zoom full"><svg><use href="#zfull"/></svg></button>
  <button class="tool" aria-label="Zoom to selection"><svg><use href="#zsel"/></svg></button>
  <button class="tool" aria-label="Zoom to layer"><svg><use href="#zlayer"/></svg></button>
  <button class="tool" disabled aria-label="Zoom to native resolution"><svg><use href="#z11"/></svg></button>
  <button class="tool" aria-label="Zoom last"><svg><use href="#zlast"/></svg></button>
  <button class="tool" disabled aria-label="Zoom next"><svg><use href="#znext"/></svg></button>
  <button class="tool" aria-label="New map view"><svg><use href="#mapnew"/></svg></button>
  <button class="tool" aria-label="New 3D map view"><svg><use href="#map3d"/></svg></button>
  <button class="tool" aria-label="New bookmark"><svg><use href="#bmnew"/></svg></button>
  <button class="tool" aria-label="Show bookmarks"><svg><use href="#bmshow"/></svg></button>
  <button class="tool" aria-label="Temporal controller"><svg><use href="#clock"/></svg></button>
  <button class="tool" aria-label="Refresh"><svg><use href="#refresh"/></svg></button>
  <i class="grip"></i>
  <button class="tool menu" aria-label="Add web map"><svg><use href="#globeadd"/></svg></button>
  <button class="tool" aria-label="Search web maps"><svg><use href="#globefind"/></svg></button>
  <button class="tool" aria-label="MetaSearch"><svg><use href="#binoc"/></svg></button>
</div>

<div class="toolbar" role="toolbar" aria-label="Layers, selection and snapping">
  <i class="grip"></i>
  <button class="tool" aria-label="Data source manager"><svg><use href="#dsm"/></svg></button>
  <button class="tool" aria-label="New GeoPackage layer"><svg><use href="#gpkg"/></svg></button>
  <button class="tool" aria-label="New shapefile layer"><svg><use href="#vnew"/></svg></button>
  <button class="tool" aria-label="New SpatiaLite layer"><svg><use href="#fnew"/></svg></button>
  <button class="tool" aria-label="New scratch layer"><svg><use href="#chip"/></svg></button>
  <button class="tool" aria-label="New mesh layer"><svg><use href="#meshnew"/></svg></button>
  <button class="tool" aria-label="New virtual layer"><svg><use href="#virtnew"/></svg></button>
  <i class="grip"></i>
  <button class="tool drop" aria-label="Select features"><svg><use href="#selrect"/></svg></button>
  <button class="tool drop" aria-label="Select by value"><svg><use href="#selform"/></svg></button>
  <button class="tool drop" aria-label="Deselect features"><svg><use href="#desel"/></svg></button>
  <button class="tool" aria-label="Select by location"><svg><use href="#selloc"/></svg></button>
  <i class="grip"></i>
  <button class="tool" aria-label="Enable snapping"><svg><use href="#magnet"/></svg></button>
  <button class="tool menu" disabled aria-label="Snapping layers"><svg><use href="#snapv"/></svg></button>
  <button class="tool menu pressed muted" aria-label="Snapping type"><svg><use href="#snappts"/></svg></button>
  <div class="spin tolerance"><input type="text" value="12" aria-label="Snapping tolerance" disabled><span class="steps"><button aria-label="Increase tolerance"></button><button aria-label="Decrease tolerance"></button></span></div>
  <div class="combo units"><select aria-label="Tolerance units" disabled><option>px</option></select></div>
  <button class="tool" aria-label="Topological editing"><svg><use href="#topo"/></svg></button>
  <button class="tool menu" aria-label="Avoid overlap"><svg><use href="#overlap"/></svg></button>
  <button class="tool" disabled aria-label="Snap on intersection"><svg><use href="#cross"/></svg></button>
  <button class="tool drop" disabled aria-label="Self-snapping"><svg><use href="#selfsnap"/></svg></button>
  <button class="tool" disabled aria-label="Enable tracing"><svg><use href="#trace"/></svg></button>
</div>

<div class="toolbar" role="toolbar" aria-label="Digitizing">
  <i class="grip"></i>
  <button class="tool menu" aria-label="Current edits"><svg><use href="#pencils"/></svg></button>
  <button class="tool pressed" aria-label="Toggle editing"><svg><use href="#pencil"/></svg></button>
  <button class="tool" aria-label="Save layer edits"><svg><use href="#saveedit"/></svg></button>
  <button class="tool drop" disabled aria-label="Digitize with segment"><svg><use href="#line"/></svg></button>
  <button class="tool" aria-label="Add polygon feature"><svg><use href="#polynew"/></svg></button>
  <button class="tool drop" aria-label="Vertex tool"><svg><use href="#digi"/></svg></button>
  <button class="tool" disabled aria-label="Modify attributes"><svg><use href="#multi"/></svg></button>
  <button class="tool" disabled aria-label="Delete selected"><svg><use href="#trash"/></svg></button>
  <button class="tool" disabled aria-label="Cut features"><svg><use href="#cut"/></svg></button>
  <button class="tool" disabled aria-label="Copy features"><svg><use href="#copy"/></svg></button>
  <button class="tool" disabled aria-label="Paste features"><svg><use href="#paste"/></svg></button>
  <button class="tool" aria-label="Undo"><svg><use href="#undo"/></svg></button>
  <button class="tool" disabled aria-label="Redo"><svg><use href="#redo"/></svg></button>
  <i class="grip"></i>
  <button class="tool faded" aria-label="Advanced digitizing"><svg><use href="#setsq"/></svg></button>
  <button class="tool drop" aria-label="Move feature"><svg><use href="#movef"/></svg></button>
  <button class="tool" aria-label="Rotate feature"><svg><use href="#rotf"/></svg></button>
  <button class="tool" aria-label="Scale feature"><svg><use href="#scalef"/></svg></button>
  <button class="tool pressed marked" aria-label="Simplify feature"><svg><use href="#simplify"/></svg></button>
  <button class="tool" aria-label="Add ring"><svg><use href="#ringnew"/></svg></button>
  <button class="tool" aria-label="Add part"><svg><use href="#partnew"/></svg></button>
  <button class="tool" aria-label="Fill ring"><svg><use href="#fillring"/></svg></button>
  <button class="tool" aria-label="Delete ring"><svg><use href="#ringdel"/></svg></button>
  <button class="tool" aria-label="Delete part"><svg><use href="#partdel"/></svg></button>
  <button class="tool" aria-label="Reshape features"><svg><use href="#reshape"/></svg></button>
  <button class="tool" aria-label="Offset curve"><svg><use href="#offset"/></svg></button>
  <button class="tool" disabled aria-label="Reverse line"><svg><use href="#splitv"/></svg></button>
  <button class="tool" aria-label="Trim or extend"><svg><use href="#node"/></svg></button>
  <button class="tool" aria-label="Split features"><svg><use href="#splitf"/></svg></button>
  <button class="tool" disabled aria-label="Split parts"><svg><use href="#splitf"/></svg></button>
  <button class="tool" disabled aria-label="Merge features"><svg><use href="#merge"/></svg></button>
  <button class="tool" disabled aria-label="Merge attributes"><svg><use href="#align"/></svg></button>
  <button class="tool drop" disabled aria-label="Rotate point symbols"><svg><use href="#rotsym"/></svg></button>
</div>

<main class="work">
  <div class="sidebar" role="toolbar" aria-label="Manage layers">
    <i class="grip"></i>
    <button class="tool" aria-label="Add vector layer"><svg><use href="#vadd"/></svg></button>
    <button class="tool" aria-label="Add raster layer"><svg><use href="#raster"/></svg></button>
    <button class="tool" aria-label="Add mesh layer"><svg><use href="#meshadd"/></svg></button>
    <button class="tool" aria-label="Add delimited text layer"><svg><use href="#comma"/></svg></button>
    <button class="tool" aria-label="Add SpatiaLite layer"><svg><use href="#fadd"/></svg></button>
    <button class="tool" aria-label="Add virtual layer"><svg><use href="#virtadd"/></svg></button>
    <button class="tool drop" aria-label="Add PostGIS layer"><svg><use href="#pg"/></svg></button>
    <button class="tool" aria-label="Add WMS layer"><svg><use href="#earthadd"/></svg></button>
    <button class="tool" aria-label="Add WCS layer"><svg><use href="#wcs"/></svg></button>
    <button class="tool" aria-label="Add WFS layer"><svg><use href="#wfs"/></svg></button>
    <button class="tool drop" aria-label="New vector layer"><svg><use href="#vnew"/></svg></button>
  </div>

  <section class="layers" aria-label="Layers">
    <div class="dockhead"><h2>Layers</h2>
      <button aria-label="Float panel"><svg viewBox="0 0 11 11"><rect x=".5" y=".5" width="10" height="10" rx="2"/><path d="M2.500 4.500h4v4h-4zM4.500 4V2.500h4v4H7"/></svg></button>
      <button aria-label="Close panel"><svg viewBox="0 0 11 11"><rect x=".5" y=".5" width="10" height="10" rx="2"/><path stroke-width="1.800" d="M3 3l5 5M8 3l-5 5"/></svg></button>
    </div>
    <div class="docktools">
      <button class="mini" aria-label="Layer styling"><svg><use href="#brush"/></svg></button>
      <button class="mini" aria-label="Add group"><svg><use href="#group"/></svg></button>
      <button class="mini menu" aria-label="Map themes"><svg><use href="#eye"/></svg></button>
      <button class="mini menu" aria-label="Filter legend"><svg><use href="#funnel"/></svg></button>
      <button class="mini drop" aria-label="Filter by expression"><svg><use href="#eps"/></svg></button>
      <button class="mini" aria-label="Expand all"><svg><use href="#expand"/></svg></button>
      <button class="mini" aria-label="Collapse all"><svg><use href="#collapse"/></svg></button>
      <button class="mini" aria-label="Remove layer"><svg><use href="#remove"/></svg></button>
    </div>
    <ul class="tree">
      <li><label><input class="check" type="checkbox" checked><span class="sym"><svg viewBox="0 0 16 16"><circle cx="8" cy="8" r="6.200" fill="#b7b7b7" stroke="#6a7a9b" stroke-width="1.300"/></svg></span><span>New gda02</span></label></li>
      <li><label><input class="check" type="checkbox" checked><span class="sym short"><svg viewBox="0 0 14 16"><path d="M0 8h14" stroke="#6b7f68" stroke-width="2"/></svg></span><span>New gda01</span></label></li>
      <li class="active"><label><input class="check" type="checkbox" checked><span class="sym"><svg viewBox="0 0 16 16"><rect x=".5" y=".5" width="15" height="15" fill="#e66d37" stroke="#ac4a26"/><path d="M11 2L5 13" stroke="#b9856a" stroke-width="3.500"/><path d="M11.500 2L5.500 12" stroke="#ea8350" stroke-width="2"/><path d="M4 11l3 1.500L3.500 15zM10 2l3 1.500.5-2-2-1z" fill="#ddd"/></svg></span><u>New gda</u></label></li>
    </ul>
  </section>
  <div class="splitter"><i></i></div>

  <section class="map" aria-label="Map canvas">
    <svg class="canvas" aria-hidden="true"><g transform="translate(-311 -163)">
      <path d="M489.500 357.500L790.500 305 843.500 439 670.500 554.500 490.500 514z" fill="#e66d37" stroke="#3c3c3c"/>
      <path d="M1000 365.500L1251 322 1295 434 1151 529.500 1001 496z" fill="#e66d37" stroke="#3c3c3c"/>
      <path d="M490.500 420L513 385.500 551 359.500 610 337 670 326.500H735.500L777.500 336 811.500 358.500 822 386 819 421 804.500 452.500 777 484 739 509 692 528 649 537 600 538.500 562 530.500 528 511 505 485.500 490.500 452z" fill="#e96130" stroke="#f10d0d"/>
    </g></svg>
    <form class="smooth">
      <div class="row">
        <label for="method">Method</label>
        <div class="combo method"><select id="method"><option>Smooth</option></select></div>
        <div class="actions"><button type="button">确定</button><button type="button">取消</button></div>
      </div>
      <div class="row">
        <label for="iter">Iterations</label>
        <div class="spin marked iter"><input id="iter" type="text" value="2"><button class="clear" type="button" aria-label="Clear iterations"><svg><use href="#clear"/></svg></button><span class="steps"><button type="button" aria-label="More iterations"></button><button type="button" aria-label="Fewer iterations"></button></span></div>
        <label class="offlabel" for="off">Offset</label>
        <div class="spin marked off"><input id="off" type="text" value="28 %"><button class="clear" type="button" aria-label="Clear offset"><svg><use href="#clear"/></svg></button><span class="steps"><button type="button" aria-label="Increase offset"></button><button type="button" aria-label="Decrease offset"></button></span></div>
      </div>
      <p>1 feature(s): 6 to 21 vertices (350%)</p>
    </form>
    <svg class="canvas over" aria-hidden="true"><g transform="translate(-311 -163)"><path d="M1033 219.500L842 379" stroke="#f3140c" stroke-width="2"/><path d="M833 386l5-13.500 9.500 12.500z" fill="#f3140c"/></g></svg>
  </section>
</main>

<footer class="status">
  <label class="locator"><svg viewBox="0 0 14 14" aria-hidden="true"><circle cx="5.500" cy="5.500" r="4.500"/><path d="M9 9l4 4" stroke-width="2"/></svg><input type="text" placeholder="Type to locate (Ctrl+K)" aria-label="Locator"></label>
  <label class="push" for="coord">Coordinate</label><input class="field coord" id="coord" type="text" value="-1.631° ,0.258°">
  <button class="plain" aria-label="Toggle extents"><svg viewBox="0 0 16 16"><path d="M1 3c3-3 6-2 6 0 0 3 2 5 6 5 2 1 2 6-2 7S3 13 1 8z" fill="#ddd" stroke="#333" stroke-width="1.300"/><path d="M2 4l5 4M3 8l6-6M6 12l7-8M9 14l3-5M13 3l2-2" stroke="#333" stroke-width="1.500"/><circle cx="10" cy="11.500" r="1.800" fill="#fff" stroke="#333"/></svg></button>
  <label class="scale-l" for="scale">Scale</label><div class="combo scale"><select id="scale"><option>1:3352311</option></select></div>
  <button class="plain lock" aria-label="Lock scale"><svg viewBox="0 0 16 16"><path d="M4 8V5a4 4 0 0 1 8 0v3" fill="none" stroke="#888" stroke-width="1.800"/><rect x="2.500" y="7" width="11" height="8" rx="1" fill="#5e6470" stroke="#555"/></svg></button>
  <label for="mag">Magnifier</label><div class="spin mag"><input id="mag" type="text" value="100%"><span class="steps"><button aria-label="Magnify"></button><button aria-label="Reduce"></button></span></div>
  <label class="rot-l" for="rot">Rotation</label><div class="spin rot"><input id="rot" type="text" value="0.0 °"><span class="steps"><button aria-label="Rotate right"></button><button aria-label="Rotate left"></button></span></div>
  <label class="render"><input class="check" type="checkbox" checked>Render</label>
  <button class="plain crs"><svg viewBox="0 0 16 16" aria-hidden="true"><circle cx="8" cy="8" r="6.500" fill="#c5d0c5" stroke="#899889"/><path d="M0 8h16M8 1v14M3 4h10M3 12h10M5 2c-2 4-2 8 0 12M11 2c2 4 2 8 0 12" fill="none" stroke="#7f8d7f"/></svg>EPSG:4326</button>
  <button class="plain msgs" aria-label="Messages"><svg viewBox="0 0 16 16"><path d="M8 1c4 0 7.500 2 7.500 6 0 2-1 4-2.500 5l1 3.500-4-2.500H8C3 13 .5 10 .5 7S4 1 8 1z" fill="#555b68"/></svg></button>
</footer>
</div>
</body>
</html>
```
FILE: styles.css
```css
* { box-sizing: border-box; }
body { margin: 0; background: #f0f0f0; color: #000; font: 12px "Noto Sans", "Open Sans", sans-serif; }
button, input, select { margin: 0; padding: 0; border: 0; background: none; color: inherit; font: inherit; border-radius: 0; }
h1, h2, p, ul { margin: 0; padding: 0; font: inherit; list-style: none; }
svg { display: block; overflow: visible; }
.sprite { position: absolute; width: 0; height: 0; }
.green { fill: #8bb78b; stroke: #5f6f5d; }
.gray { fill: #bcbcbc; stroke: #747474; }

.app { display: flex; flex-direction: column; height: 100vh; border-bottom: 1px solid #111; }

.titlebar { display: flex; align-items: center; height: 23px; flex: none; padding-left: 2px; background: #fff; color: #777; }
.logo { width: 17px; height: 17px; margin-right: 3px; }
.titlebar h1 { font-size: 12px; }
.winbtns { display: flex; margin-left: auto; margin-right: 2px; }
.winbtns button { display: grid; place-items: center; width: 46px; height: 20px; }
.winbtns svg { width: 10px; height: 10px; fill: none; stroke: #777; }

.menubar { display: flex; align-items: center; gap: 15px; height: 22px; flex: none; padding-left: 10px; border-bottom: 1px solid #d4d4d4; color: #999; }

.toolbar { display: flex; align-items: center; height: 39px; flex: none; border-bottom: 1px solid #b5b5b5; background: linear-gradient(#fafafa, #eee); }
.grip { width: 4px; height: 18px; flex: none; margin: 0 4px 0 8px; background: radial-gradient(circle, #bbb 40%, transparent 50%) 0 0 / 3px 3px; }
.toolbar .grip:first-child { margin-left: 5px; }
.tool { position: relative; display: flex; align-items: center; justify-content: center; width: 33px; height: 31px; flex: none; padding-right: 1px; border-radius: 3px; }
.tool svg { width: 24px; height: 24px; flex: none; }
.tool:disabled svg { opacity: .28; filter: grayscale(1); }
.faded svg { opacity: .6; }
.drop { width: 45px; justify-content: flex-start; padding-left: 4px; }
.drop::after, .menu::after { content: ""; border: 4px solid transparent; border-top-color: #4c4c4c; border-bottom: 0; }
.drop::after { margin-left: 6px; }
.drop:disabled::after, .menu:disabled::after, .muted::after { border-top-color: #999; }
.menu::after { position: absolute; right: 2px; bottom: 2px; border-width: 3px 3px 0; }
.pressed { background: #dcdcdc; border: 1px solid #b7b7b7; }
.marked { position: relative; }
.marked::before { content: ""; position: absolute; border: 2px solid #f3140c; pointer-events: none; z-index: 1; }
.tool.marked::before { inset: -6px -2px -5px -6px; }

.spin, .combo, .field { font: 10px "Liberation Mono", monospace; }
.spin { display: flex; align-items: center; height: 20px; border: 1px solid #aaa; border-radius: 2px; background: #fff; }
.spin input { flex: 1; min-width: 0; padding-left: 4px; }
.steps { display: flex; flex-direction: column; align-items: center; justify-content: center; gap: 3px; align-self: stretch; width: 14px; flex: none; border-left: 1px solid #bbb; background: linear-gradient(#fff, #eee); }
.steps button { border: 4px solid transparent; border-bottom-color: #555; border-top: 0; }
.steps button + button { border-top: 4px solid #555; border-bottom: 0; }
.combo { position: relative; height: 22px; border: 1px solid #aaa; border-radius: 2px; background: linear-gradient(#fff, #f0f0f0); }
.combo select { width: 100%; height: 100%; padding-left: 4px; appearance: none; opacity: 1; }
.combo::after { content: ""; position: absolute; right: 7px; top: 8px; border: 4px solid transparent; border-top-color: #555; border-bottom: 0; pointer-events: none; }
.tolerance { width: 88px; margin-right: 2px; background: #f3f3f3; color: #6b7a68; }
.tolerance .steps button { border-bottom-color: #888; }
.tolerance .steps button + button { border-top-color: #888; }
.units { width: 82px; margin-right: 2px; color: #6b7a68; border-color: #c4c9d0; }
.units::after { border-top-color: #888; }

.work { display: flex; flex: 1; min-height: 0; border-top: 1px solid #b5b5b5; }
.sidebar { width: 52px; flex: none; padding: 4px 0 0 4px; background: linear-gradient(90deg, #fafafa, #eee); }
.sidebar .grip { display: block; width: 18px; height: 4px; margin: 0 0 3px 15px; }
.sidebar .tool { height: 32px; }
.sidebar .drop { width: 45px; }
.sidebar .drop::after { margin-left: 6px; }

.layers { display: flex; flex-direction: column; width: 252px; flex: none; border-left: 2px solid #b5b5b5; }
.dockhead { display: flex; align-items: center; gap: 3px; height: 17px; padding: 0 2px; }
.dockhead h2 { margin-right: auto; }
.dockhead svg { width: 11px; height: 11px; fill: none; stroke: #666b80; }
.docktools { display: flex; align-items: center; height: 32px; padding-left: 1px; }
.mini { position: relative; display: flex; align-items: center; justify-content: center; width: 25px; height: 24px; }
.mini svg { width: 16px; height: 16px; flex: none; }
.mini.drop { width: 38px; padding-left: 2px; }
.mini.menu::after { right: 1px; bottom: 2px; }
.tree { flex: 1; border: 1px solid #b5b5b5; border-left: 0; background: #fff; font: 700 13px "Open Sans", sans-serif; }
.tree li { height: 19px; padding-left: 22px; }
.tree li.active { background: #f1f1f1; }
.tree label { display: flex; align-items: center; height: 19px; }
.sym { width: 16px; margin: 0 6px 0 6px; }
.sym.short { width: 14px; }
.check { appearance: none; width: 14px; height: 14px; border: 1px solid #aaa; background: #fff; display: grid; place-items: center; }
.check:checked::after { content: ""; width: 4px; height: 8px; margin-top: -2px; border: solid #000; border-width: 0 2px 2px 0; transform: rotate(40deg); }
.splitter { display: flex; align-items: center; width: 6px; flex: none; padding-left: 2px; }
.splitter i { width: 3px; height: 18px; background: radial-gradient(circle, #bbb 40%, transparent 50%) 0 0 / 3px 3px; }

.map { position: relative; flex: 1; border: solid #b5b5b5; border-width: 0 1px 1px; background: #fff; overflow: hidden; }
.canvas { position: absolute; inset: 0; width: 100%; height: 100%; pointer-events: none; }
.smooth { position: absolute; top: 0; right: 0; width: 514px; height: 105px; padding: 18px 17px 0; border: solid #b5b5b5; border-width: 0 0 1px 1px; background: #f0f0f0; font: 10px "Liberation Mono", "Noto Sans CJK SC", monospace; }
.row { display: flex; align-items: center; height: 22px; margin-bottom: 6px; }
.row label { width: 61px; flex: none; white-space: nowrap; }
.combo.method { width: 208px; margin-left: -18px; }
.actions { display: flex; gap: 6px; margin-left: auto; margin-right: 7px; }
.actions button { width: 80px; height: 20px; border: 1px solid #b0b0b0; border-radius: 2px; background: linear-gradient(#fff, #efefef); font: 12px "Noto Sans CJK SC", sans-serif; line-height: 18px; }
.iter { width: 183px; margin-left: 5px; }
.off { width: 183px; }
.row .offlabel { width: 36px; margin: 0 5px 0 6px; }
.iter.marked::before, .off.marked::before { inset: -5px -8px -6px -6px; }
.clear { margin-right: 9px; }
.clear svg { width: 14px; height: 10px; }
.smooth p { line-height: 14px; }

.status { display: flex; align-items: center; height: 28px; flex: none; padding: 0 7px 0 4px; font: 10px "Liberation Mono", monospace; }
.status svg { width: 16px; height: 16px; }
.locator { display: flex; align-items: center; gap: 6px; width: 244px; height: 22px; padding-left: 8px; border: 1px solid #aaa; border-radius: 3px; background: #fff; }
.locator svg { width: 13px; height: 13px; fill: none; stroke: #8a8a8a; stroke-width: 1.500; }
.locator input { flex: 1; min-width: 0; }
.locator input::placeholder { color: #6b7a68; opacity: 1; }
.push { margin-left: auto; }
.field { height: 22px; border: 1px solid #aaa; border-radius: 2px; background: #fff; padding-left: 3px; }
.coord { width: 103px; margin: 0 4px; }
.scale-l { margin-left: 12px; }
.combo.scale { width: 82px; margin: 0 11px 0 4px; background: linear-gradient(90deg, #fff 61px, #bbb 61px, #bbb 62px, #f4f4f4 62px); }
.lock { margin-right: 6px; }
.mag { width: 89px; margin: 0 9px 0 4px; }
.rot { width: 89px; margin: 0 6px 0 9px; }
.render { display: flex; align-items: center; gap: 4px; }
.crs { display: flex; align-items: center; gap: 1px; margin-left: 16px; }
.msgs { margin-left: 30px; }
```
